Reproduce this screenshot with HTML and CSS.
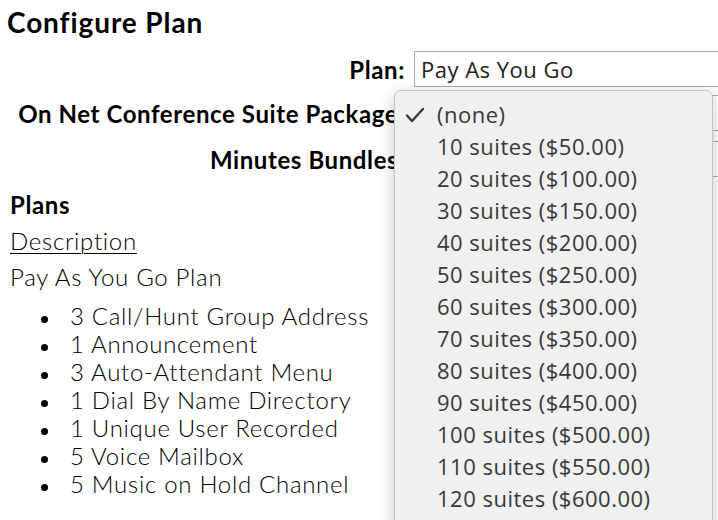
FILE: index.html
```html
<!DOCTYPE html>
<html>
	<head>
		<meta charset="UTF-8">
		<title>Configure Plan</title>
		<link rel="stylesheet" href="styles.css">
	</head>
	<body>
		<h1 class="title">Configure Plan</h1>
		<div class="form">
			<div class="row row-plan">
				<label class="lbl">Plan:</label>
				<div class="field"><div class="select">Pay As You Go</div></div>
			</div>
			<div class="row">
				<label class="lbl">On Net Conference Suite Package:</label>
				<div class="field"><div class="select">(none)</div></div>
			</div>
			<div class="row">
				<label class="lbl">Minutes Bundles:</label>
				<div class="field"><div class="select">(none)</div></div>
			</div>
		</div>
		<div class="plans">
			<div class="plans-head">Plans</div>
			<div class="desc-head">Description</div>
			<div class="desc">Pay As You Go Plan</div>
			<ul class="features">
				<li>3 Call/Hunt Group Address</li>
				<li>1 Announcement</li>
				<li>3 Auto-Attendant Menu</li>
				<li>1 Dial By Name Directory</li>
				<li>1 Unique User Recorded</li>
				<li>5 Voice Mailbox</li>
				<li>5 Music on Hold Channel</li>
			</ul>
		</div>

		<div class="menu">
			<div class="opt checked">
				<svg class="check" width="20" height="16" viewBox="0 0 20 16"><path d="M2 8.5 L7 14 L18 2" fill="none" stroke="#3a3a3a" stroke-width="2.4" stroke-linecap="round" stroke-linejoin="round"/></svg>
				(none)
			</div>
			<div class="opt">10 suites ($50.00)</div>
			<div class="opt">20 suites ($100.00)</div>
			<div class="opt">30 suites ($150.00)</div>
			<div class="opt">40 suites ($200.00)</div>
			<div class="opt">50 suites ($250.00)</div>
			<div class="opt">60 suites ($300.00)</div>
			<div class="opt">70 suites ($350.00)</div>
			<div class="opt">80 suites ($400.00)</div>
			<div class="opt">90 suites ($450.00)</div>
			<div class="opt">100 suites ($500.00)</div>
			<div class="opt">110 suites ($550.00)</div>
			<div class="opt">120 suites ($600.00)</div>
		</div>
	</body>
</html>
```

FILE: styles.css
```css
*{margin: 0;padding: 0;box-sizing: border-box;}
html,body{height: 100%;overflow: hidden;}
body{background: #fff;color: #000;font-family: "Lato", "Open Sans", sans-serif;font-size: 24px;font-weight: 300;letter-spacing: 0.7px;}

.title{font-size: 28px;font-weight: 700;line-height: 32px;padding: 6px 7px 0;letter-spacing: 0.9px;}

.form{margin-top: 13px;}
.row{display: flex;align-items: center;height: 46px;}
.row-plan{height: 36px;margin-bottom: 3px;}
.lbl{width: 414px;text-align: right;font-weight: 700;padding-right: 9px;white-space: nowrap;letter-spacing: 0.6px;}
.field{flex: 1;}
.select{height: 36px;border: 1px solid #a9a9a9;border-right: none;background: #fff;padding: 0 6px;line-height: 34px;font-family: "Open Sans", sans-serif;font-size: 22px;font-weight: 400;color: #222;letter-spacing: 0.5px;}

.plans{padding: 0 10px;}
.plans-head{font-weight: 700;line-height: 36px;margin-top: 5px;letter-spacing: 0.6px;}
.desc-head{text-decoration: underline;text-decoration-thickness: 1px;text-underline-offset: 3px;line-height: 36px;}
.desc{line-height: 36px;}
.features{list-style: none;padding-left: 31px;margin-top: 7px;}
.features li{height: 28px;line-height: 28px;}
.features li::before{content: "";display: inline-block;width: 7px;height: 7px;border-radius: 50%;background: #000;margin-right: 22px;vertical-align: middle;}

.menu{position: absolute;left: 394px;top: 90px;width: 319px;height: 450px;background: #f0f0f0;border: 1px solid #c4c4c4;border-radius: 7px;box-shadow: 0 4px 16px rgba(0,0,0,0.22);padding-top: 7px;font-family: "Open Sans", sans-serif;font-size: 22px;font-weight: 400;color: #383838;letter-spacing: 0.5px;}
.opt{position: relative;height: 32px;line-height: 32px;padding-left: 42px;}
.check{position: absolute;left: 10px;top: 9px;}
```
